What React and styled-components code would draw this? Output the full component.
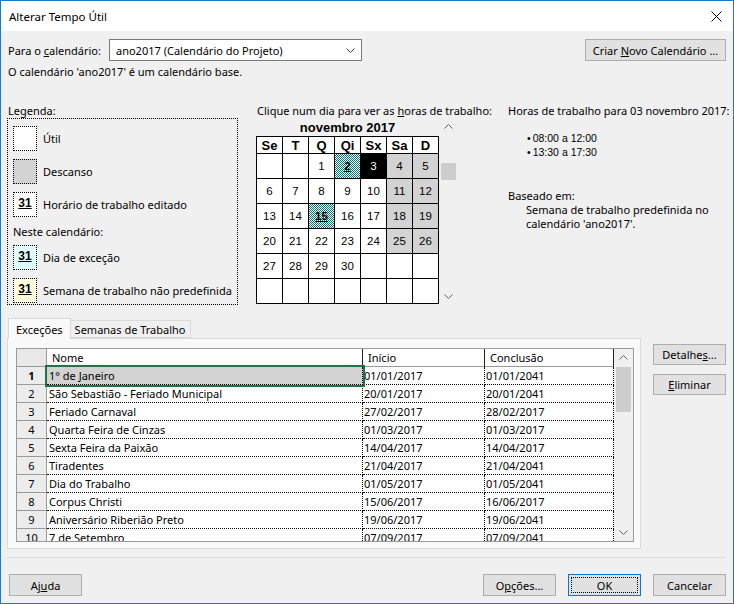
import React from 'react';
import styled, { createGlobalStyle } from 'styled-components';

const GlobalStyle = createGlobalStyle`
  html, body { margin: 0; padding: 0; background: #fff; }
  * { box-sizing: border-box; }
`;

const Window = styled.div`
  width: 734px;
  height: 604px;
  border: 1px solid #1979ca;
  background: #f0f0f0;
  display: flex;
  flex-direction: column;
  font-family: "Noto Sans", sans-serif;
  font-size: 11px;
  color: #000;
  overflow: hidden;
`;

const TitleBar = styled.div`
  height: 30px;
  flex: none;
  background: #fff;
  display: flex;
  align-items: center;
  justify-content: space-between;
  padding: 0 11px 0 8px;
  font-size: 11.5px;
`;

const Body = styled.div`
  flex: 1;
  display: flex;
  flex-direction: column;
  padding: 8px 7px 7px 6px;
`;

const TopRow = styled.div`
  display: flex;
  align-items: center;
  height: 22px;
`;

const Label = styled.span`
  width: ${p => p.$w || 'auto'};
  padding-left: 1px;
`;

const Select = styled.div`
  width: 253px;
  height: 22px;
  margin-left: 1px;
  border: 1px solid #7a7a7a;
  background: #fff;
  display: flex;
  align-items: center;
  justify-content: space-between;
  padding: 0 6px 0 6px;
`;

const Button = styled.div`
  position: relative;
  width: ${p => p.$w || 73}px;
  height: ${p => p.$h || 22}px;
  background: #e1e1e1;
  border: 1px solid ${p => (p.$focused ? '#0078d7' : '#adadad')};
  display: flex;
  align-items: center;
  justify-content: center;
  flex: none;
  white-space: nowrap;
  ${p => p.$focused && `
    &::after {
      content: '';
      position: absolute;
      inset: 2px;
      border: 1px dotted #000;
    }
  `}
`;

const Info = styled.div`
  margin-top: 3px;
  line-height: 15px;
  padding-left: 1px;
`;

const Middle = styled.div`
  display: flex;
  margin-top: 24px;
  height: 202px;
`;

const LegendCol = styled.div`
  width: 231px;
  flex: none;
  display: flex;
  flex-direction: column;
`;

const Caption = styled.div`
  line-height: 15px;
  height: 15px;
  padding-left: ${p => p.$pl || 0}px;
  white-space: nowrap;
`;

const LegendBox = styled.div`
  flex: 1;
  border: 1px dotted #000;
  padding: 7px 5px 0 5px;
  display: flex;
  flex-direction: column;
`;

const LegendItem = styled.div`
  display: flex;
  align-items: center;
  gap: 6px;
  white-space: nowrap;
  margin-top: ${p => p.$mt || 0}px;
`;

const LegendNote = styled.div`
  line-height: 15px;
  margin-top: 7px;
`;

const Swatch = styled.div`
  width: 24px;
  height: 25px;
  flex: none;
  border: 1px dotted #000;
  background: ${p => p.$bg};
  display: flex;
  align-items: flex-start;
  justify-content: center;
  padding-top: 3px;
  font-family: "Liberation Sans", Arial, sans-serif;
  font-weight: 700;
  font-size: 12px;
  text-decoration: underline;
`;

const CalendarCol = styled.div`
  width: 252px;
  flex: none;
  margin-left: 18px;
  display: flex;
  flex-direction: column;
`;

const CalendarWrap = styled.div`
  display: flex;
  flex: 1;
`;

const CalendarMain = styled.div`
  width: 183px;
  display: flex;
  flex-direction: column;
`;

const MonthTitle = styled.div`
  height: 18px;
  display: flex;
  align-items: center;
  justify-content: center;
  font-family: "Liberation Sans", Arial, sans-serif;
  font-weight: 700;
  font-size: 13px;
`;

const DayGrid = styled.div`
  display: grid;
  grid-template-columns: repeat(7, 25px);
  grid-template-rows: 16px repeat(6, 24px);
  gap: 1px;
  padding: 1px;
  background: #000;
  font-family: "Liberation Sans", Arial, sans-serif;
  font-size: 11.5px;
`;

const DayHead = styled.div`
  background: #fff;
  font-weight: 700;
  font-size: 13px;
  display: flex;
  align-items: center;
  justify-content: center;
`;

const DayCell = styled.div`
  background: ${p => p.$bg || '#fff'};
  color: ${p => p.$fg || '#000'};
  display: flex;
  align-items: center;
  justify-content: center;
  font-weight: ${p => (p.$bold ? 700 : 400)};
  text-decoration: ${p => (p.$bold ? 'underline' : 'none')};
`;

const ScrollBar = styled.div`
  width: ${p => p.$w}px;
  margin-left: ${p => p.$ml || 0}px;
  background: ${p => p.$bg || 'transparent'};
  display: flex;
  flex-direction: column;
  flex: none;
`;

const ScrollArrow = styled.div`
  height: 17px;
  display: flex;
  align-items: center;
  justify-content: center;
  flex: none;
`;

const ScrollMid = styled.div`
  flex: 1;
  padding: ${p => p.$top}px ${p => p.$inset}px 0;
`;

const Thumb = styled.div`
  height: ${p => p.$h}px;
  background: #cdcdcd;
`;

const HoursCol = styled.div`
  flex: 1;
  display: flex;
  flex-direction: column;
`;

const Bullets = styled.ul`
  margin: 13px 0 0 0;
  padding: 0 0 0 19px;
  list-style: none;
  font-family: "Liberation Sans", Arial, sans-serif;
  font-size: 10.5px;
  line-height: 14px;
  & li::before { content: '•'; margin-right: 2px; }
`;

const BasedOn = styled.div`
  margin-top: 29px;
  line-height: 15px;
`;

const BasedText = styled.div`
  padding-left: 18px;
  line-height: 14px;
`;

const Lower = styled.div`
  display: flex;
  margin-top: 13px;
  gap: 12px;
`;

const TabsCol = styled.div`
  width: 634px;
  flex: none;
  display: flex;
  flex-direction: column;
`;

const TabRow = styled.div`
  display: flex;
  align-items: flex-end;
  height: 20px;
  padding-left: 1px;
`;

const Tab = styled.div`
  position: relative;
  z-index: ${p => (p.$active ? 1 : 0)};
  height: ${p => (p.$active ? 21 : 18)}px;
  margin-bottom: ${p => (p.$active ? -1 : 0)}px;
  padding: 0 ${p => (p.$active ? 7 : 4)}px;
  background: ${p => (p.$active ? '#f9f9f9' : '#f0f0f0')};
  border: 1px solid #d9d9d9;
  border-bottom: ${p => (p.$active ? 'none' : '1px solid #d9d9d9')};
  border-left: ${p => (p.$active ? '1px solid #d9d9d9' : 'none')};
  display: flex;
  align-items: center;
  white-space: nowrap;
`;

const Panel = styled.div`
  height: 211px;
  border: 1px solid #d9d9d9;
  background: #f9f9f9;
  padding: 9px 6px 0 8px;
`;

const Grid = styled.div`
  height: 194px;
  border: 1px solid #9a9a9a;
  background: #fff;
  display: flex;
  overflow: hidden;
`;

const Table = styled.div`
  display: grid;
  grid-template-columns: 30px 316px 122px 129px;
  grid-auto-rows: 18px;
  align-content: start;
`;

const HeadCell = styled.div`
  background: ${p => (p.$corner ? '#e8e8e8' : '#fff')};
  border-right: 1px solid ${p => (p.$corner ? '#9a9a9a' : '#222')};
  border-bottom: 1px solid #9a9a9a;
  padding-left: 5px;
  display: flex;
  align-items: flex-end;
  line-height: 16px;
`;

const RowHead = styled.div`
  background: #ececec;
  border-right: 1px solid #9a9a9a;
  border-bottom: 1px solid #9a9a9a;
  display: flex;
  align-items: center;
  justify-content: center;
  font-weight: ${p => (p.$bold ? 700 : 400)};
`;

const Cell = styled.div`
  position: relative;
  z-index: ${p => (p.$selected ? 1 : 0)};
  background: ${p => (p.$selected ? '#d2d2d2' : '#fff')};
  border-right: 1px dotted #000;
  border-bottom: 1px dotted #000;
  outline: ${p => (p.$selected ? '2px solid #217346' : 'none')};
  padding-left: ${p => p.$pl}px;
  display: flex;
  align-items: center;
  white-space: nowrap;
  overflow: hidden;
`;

const SideButtons = styled.div`
  display: flex;
  flex-direction: column;
  gap: 9px;
  margin-top: 26px;
`;

const Separator = styled.div`
  margin-top: 8px;
  border-top: 1px solid #dcdcdc;
`;

const Footer = styled.div`
  margin-top: auto;
  display: flex;
  gap: 12px;
  padding-left: 2px;
`;

const Spacer = styled.div`
  flex: 1;
`;

const Chevron = ({ dir = 'down', color = '#606060' }) => (
  <svg width="9" height="5" viewBox="0 0 9 5">
    <path
      d={dir === 'up' ? 'M0.5 4.5 L4.5 0.5 L8.5 4.5' : 'M0.5 0.5 L4.5 4.5 L8.5 0.5'}
      fill="none"
      stroke={color}
      strokeWidth="1"
    />
  </svg>
);

const CloseIcon = () => (
  <svg width="11" height="11" viewBox="0 0 11 11">
    <path d="M0.5 0.5 L10.5 10.5 M10.5 0.5 L0.5 10.5" stroke="#000" strokeWidth="1" />
  </svg>
);

const Scroller = ({ w, ml, bg, top, inset, thumb }) => (
  <ScrollBar $w={w} $ml={ml} $bg={bg}>
    <ScrollArrow><Chevron dir="up" /></ScrollArrow>
    <ScrollMid $top={top} $inset={inset}><Thumb $h={thumb} /></ScrollMid>
    <ScrollArrow><Chevron dir="down" /></ScrollArrow>
  </ScrollBar>
);

const GRAY = '#d3d3d3';
const CHECK = 'repeating-conic-gradient(#007a7a 0% 25%, #ffffff 0% 50%) 0 0 / 2px 2px';

const weekDays = ['Se', 'T', 'Q', 'Qi', 'Sx', 'Sa', 'D'];

const days = [
  [null, null, 1, 2, 3, 4, 5],
  [6, 7, 8, 9, 10, 11, 12],
  [13, 14, 15, 16, 17, 18, 19],
  [20, 21, 22, 23, 24, 25, 26],
  [27, 28, 29, 30, null, null, null],
  [null, null, null, null, null, null, null],
];

const dayStyle = (d, col) => {
  if (d === 2 || d === 15) return { bg: CHECK, bold: true };
  if (d === 3) return { bg: '#000', fg: '#fff' };
  if (d && col >= 5) return { bg: GRAY };
  return {};
};

const exceptions = [
  ['1° de Janeiro', '01/01/2017', '01/01/2041'],
  ['São Sebastião - Feriado Municipal', '20/01/2017', '20/01/2041'],
  ['Feriado Carnaval', '27/02/2017', '28/02/2017'],
  ['Quarta Feira de Cinzas', '01/03/2017', '01/03/2017'],
  ['Sexta Feira da Paixão', '14/04/2017', '14/04/2017'],
  ['Tiradentes', '21/04/2017', '21/04/2041'],
  ['Dia do Trabalho', '01/05/2017', '01/05/2041'],
  ['Corpus Christi', '15/06/2017', '16/06/2017'],
  ['Aniversário Riberião Preto', '19/06/2017', '19/06/2041'],
  ['7 de Setembro', '07/09/2017', '07/09/2041'],
];

const App = () => {
  return (
    <Window>
      <GlobalStyle />
      <TitleBar>
        <span>Alterar Tempo Útil</span>
        <CloseIcon />
      </TitleBar>
      <Body>
        <TopRow>
          <Label $w="101px">Para o <u>c</u>alendário:</Label>
          <Select>
            <span>ano2017 (Calendário do Projeto)</span>
            <Chevron dir="down" color="#444" />
          </Select>
          <Spacer />
          <Button $w={141}><span>Criar <u>N</u>ovo Calendário ...</span></Button>
        </TopRow>
        <Info>O calendário 'ano2017' é um calendário base.</Info>

        <Middle>
          <LegendCol>
            <Caption $pl={1}>Legenda:</Caption>
            <LegendBox>
              <LegendItem><Swatch $bg="#fff" />Útil</LegendItem>
              <LegendItem $mt={8}><Swatch $bg={GRAY} />Descanso</LegendItem>
              <LegendItem $mt={8}><Swatch $bg="#fff">31</Swatch>Horário de trabalho editado</LegendItem>
              <LegendNote>Neste calendário:</LegendNote>
              <LegendItem $mt={6}><Swatch $bg="#e0ffff">31</Swatch>Dia de exceção</LegendItem>
              <LegendItem $mt={8}><Swatch $bg="#ffffe0">31</Swatch>Semana de trabalho não predefinida</LegendItem>
            </LegendBox>
          </LegendCol>

          <CalendarCol>
            <Caption $pl={1}>Clique num dia para ver as <u>h</u>oras de trabalho:</Caption>
            <CalendarWrap>
              <CalendarMain>
                <MonthTitle>novembro 2017</MonthTitle>
                <DayGrid>
                  {weekDays.map(w => <DayHead key={w}>{w}</DayHead>)}
                  {days.map((row, r) =>
                    row.map((d, c) => {
                      const s = dayStyle(d, c);
                      return (
                        <DayCell key={`${r}-${c}`} $bg={s.bg} $fg={s.fg} $bold={s.bold}>
                          {d}
                        </DayCell>
                      );
                    })
                  )}
                </DayGrid>
              </CalendarMain>
              <Scroller w={17} ml={1} top={28} inset={1} thumb={17} />
            </CalendarWrap>
          </CalendarCol>

          <HoursCol>
            <Caption>Horas de trabalho para 03 novembro 2017:</Caption>
            <Bullets>
              <li>08:00 a 12:00</li>
              <li>13:30 a 17:30</li>
            </Bullets>
            <BasedOn>Baseado em:</BasedOn>
            <BasedText>Semana de trabalho predefinida no</BasedText>
            <BasedText>calendário 'ano2017'.</BasedText>
          </HoursCol>
        </Middle>

        <Lower>
          <TabsCol>
            <TabRow>
              <Tab $active>Exceções</Tab>
              <Tab>Semanas de Trabalho</Tab>
            </TabRow>
            <Panel>
              <Grid>
                <Table>
                  <HeadCell $corner />
                  <HeadCell>Nome</HeadCell>
                  <HeadCell>Início</HeadCell>
                  <HeadCell>Conclusão</HeadCell>
                  {exceptions.map((ex, i) => (
                    <React.Fragment key={i}>
                      <RowHead $bold={i === 0}>{i + 1}</RowHead>
                      <Cell $pl={2} $selected={i === 0}>{ex[0]}</Cell>
                      <Cell $pl={1}>{ex[1]}</Cell>
                      <Cell $pl={1}>{ex[2]}</Cell>
                    </React.Fragment>
                  ))}
                </Table>
                <Scroller w={19} bg="#f0f0f0" top={1} inset={2} thumb={45} />
              </Grid>
            </Panel>
          </TabsCol>
          <SideButtons>
            <Button $h={21}><span>Detalhe<u>s</u>...</span></Button>
            <Button $h={21}><span><u>E</u>liminar</span></Button>
          </SideButtons>
        </Lower>

        <Separator />

        <Footer>
          <Button><span>Aj<u>u</u>da</span></Button>
          <Spacer />
          <Button><span>O<u>p</u>ções...</span></Button>
          <Button $focused>OK</Button>
          <Button>Cancelar</Button>
        </Footer>
      </Body>
    </Window>
  );
};

export default App;
